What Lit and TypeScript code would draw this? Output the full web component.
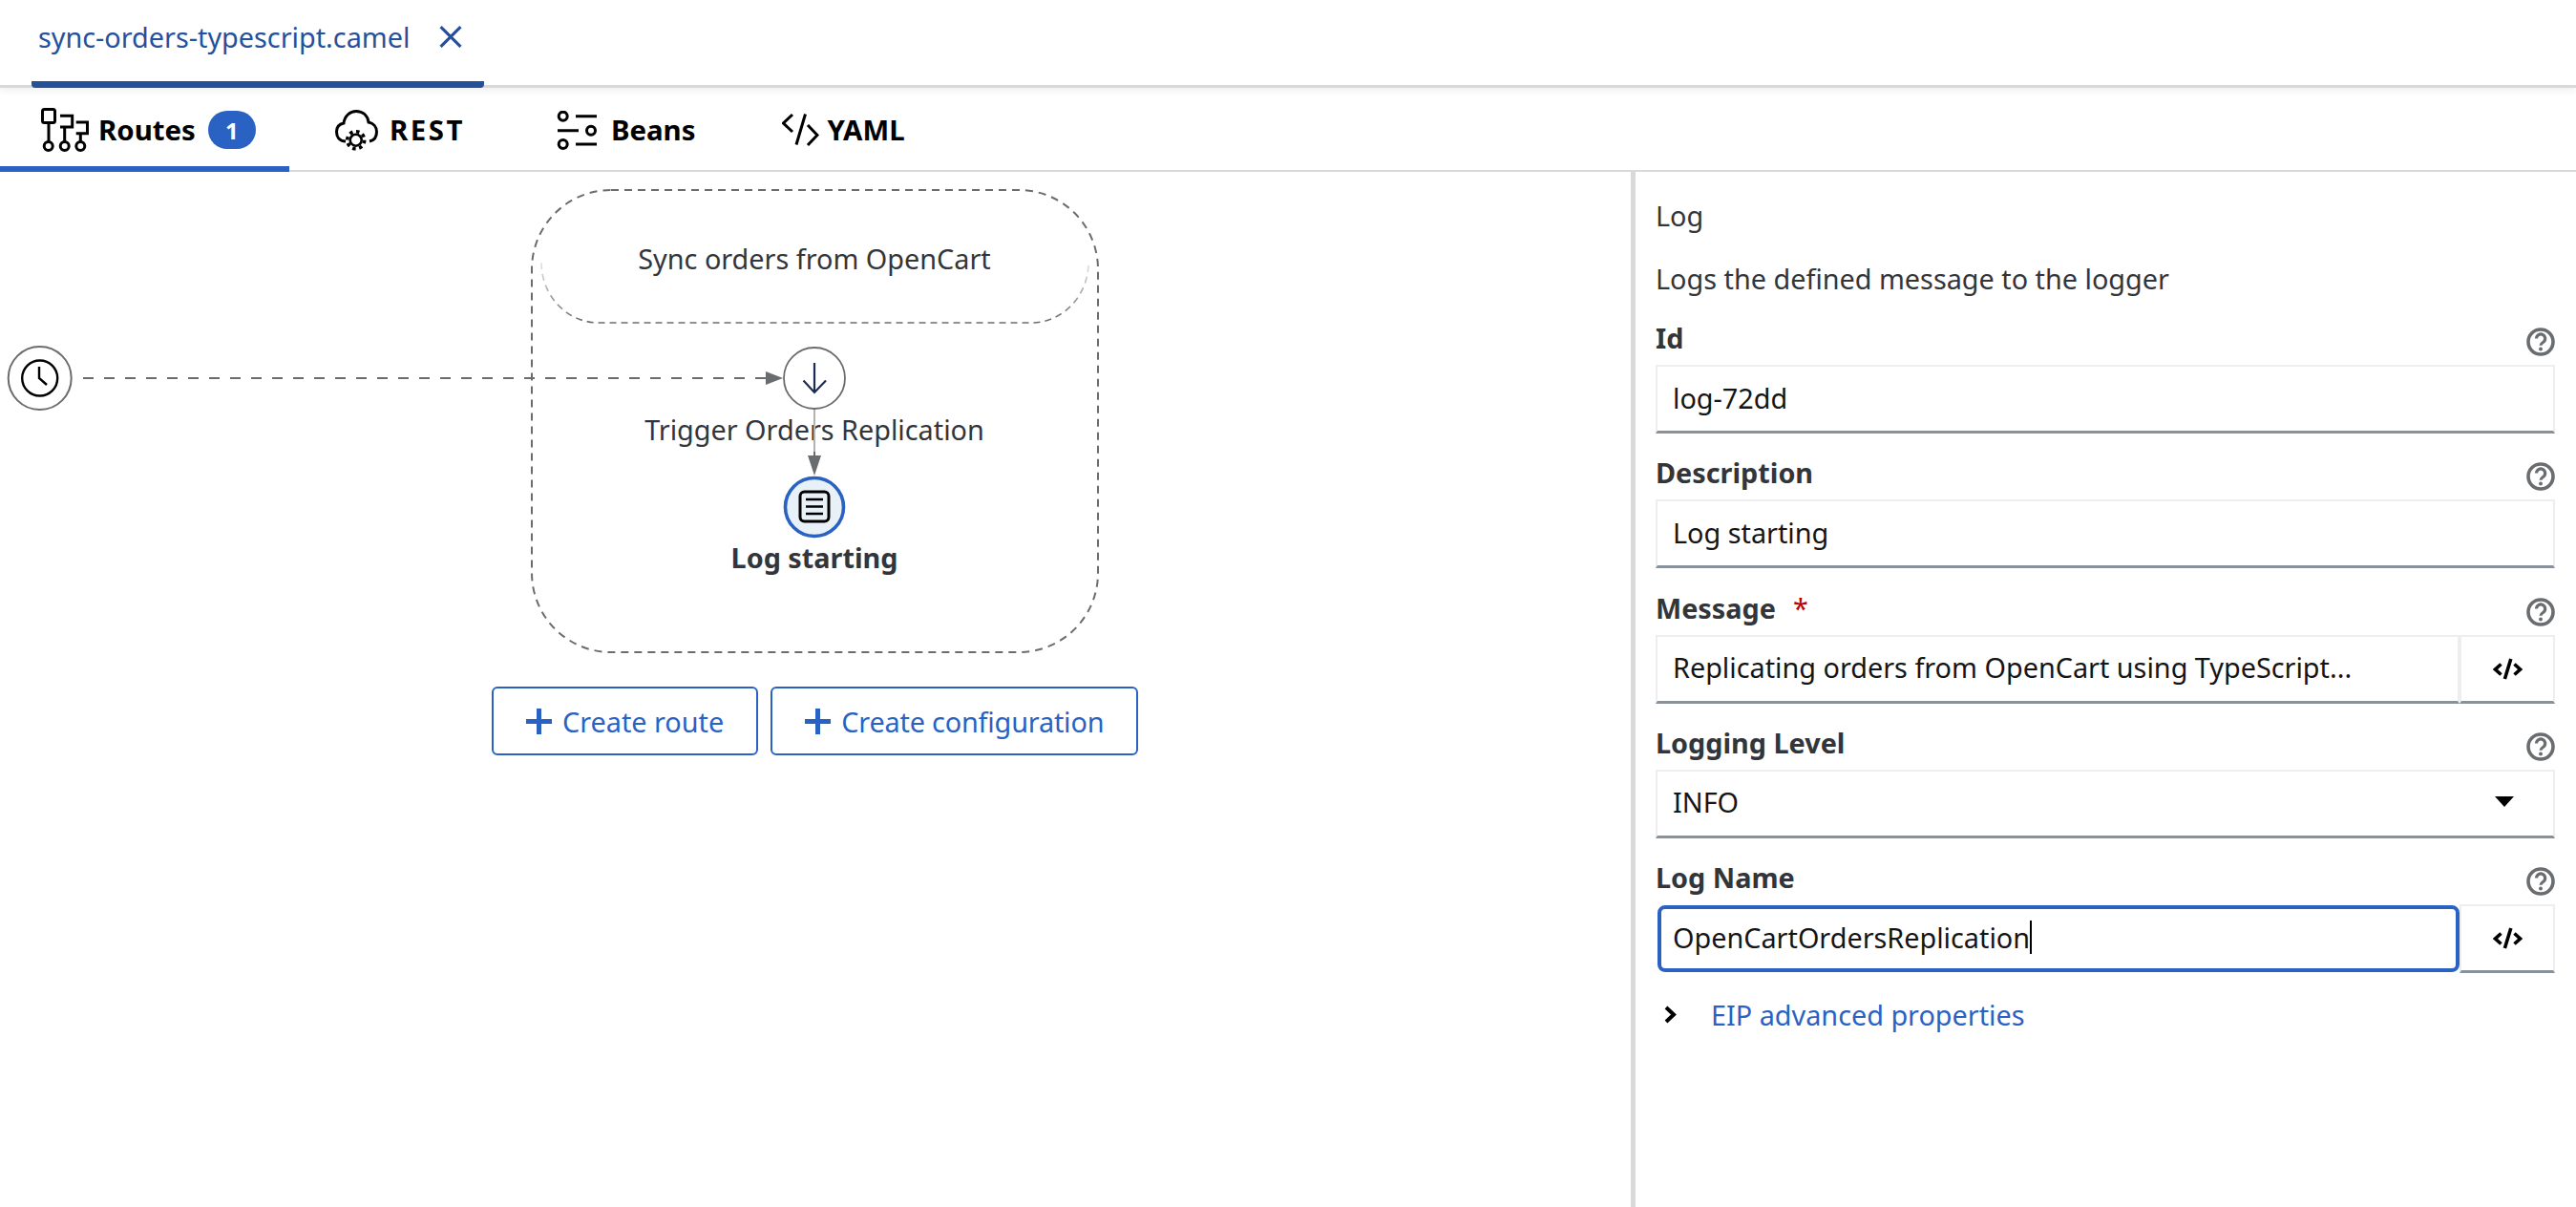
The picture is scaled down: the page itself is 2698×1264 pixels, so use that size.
import { LitElement, html, css, svg } from 'lit'
import { customElement } from 'lit/decorators.js'

const helpIcon = html`<svg class="help" viewBox="0 0 30 30" fill="none" stroke="#6a6d70" stroke-width="3.6">
  <circle cx="15" cy="15" r="13" />
  <path d="M10.5 11.5a4.6 4.6 0 1 1 7 4c-1.6 1-2.5 1.6-2.5 3.2" stroke-width="3.2" />
  <circle cx="15" cy="22.6" r="2" fill="#6a6d70" stroke="none" />
</svg>`

const codeIcon = html`<svg class="code" viewBox="0 0 31 25" fill="none" stroke="#000" stroke-width="3.6">
  <path d="M8.5 7.5 2.5 13 8.5 18.5M22.5 7.5 28.5 13 22.5 18.5M18.8 2 12.4 23" />
</svg>`

const fields = [
  { label: 'Id', value: 'log-72dd' },
  { label: 'Description', value: 'Log starting' },
  { label: 'Message', value: 'Replicating orders from OpenCart using TypeScript...', required: true, addon: true },
  { label: 'Logging Level', value: 'INFO', select: true },
  { label: 'Log Name', value: 'OpenCartOrdersReplication', addon: true, focused: true },
]

@customElement('app-root')
export class AppRoot extends LitElement {
  static styles = css`
    :host {
      display: block;
      width: 2698px;
      height: 1264px;
      overflow: hidden;
      background: #fff;
      font-family: 'Noto Sans', 'Open Sans', sans-serif;
      font-size: 28.8px;
      color: #32363a;
    }
    .filebar {
      height: 89px;
      border-bottom: 3px solid #d9d9d9;
      padding-left: 33px;
      box-shadow: 0 4px 6px rgba(0, 0, 0, 0.05);
      position: relative;
    }
    .filetab {
      width: 474px;
      height: 92px;
      box-sizing: border-box;
      padding: 0 0 8px 7px;
      display: flex;
      align-items: center;
      gap: 31px;
      color: #27509b;
      border-bottom: 7px solid #27509b;
      border-radius: 0 0 4px 4px;
    }
    .filetab svg {
      width: 24px;
      height: 23px;
    }
    .tabs {
      display: flex;
      height: 88px;
      box-sizing: border-box;
      border-bottom: 2px solid #d9d9d9;
      font-weight: 700;
      font-size: 29.4px;
      color: #000;
    }
    .tab {
      display: flex;
      align-items: center;
      height: 88px;
      box-sizing: border-box;
      padding: 0 48px;
    }
    .tab.active {
      width: 303px;
      padding: 6px 0 0 43px;
      border-bottom: 6px solid #2a62c4;
    }
    .tab.last {
      padding-left: 43px;
    }
    .tab .label {
      margin-left: 10px;
    }
    .tab.rest .label {
      margin-left: 12px;
      letter-spacing: 2.5px;
    }
    .tab.beans .label {
      margin-left: 15px;
    }
    .tab.last .label {
      margin-left: 8px;
    }
    .badge {
      margin-left: 13px;
      width: 50px;
      height: 40px;
      border-radius: 20px;
      background: #2a62c4;
      color: #fff;
      font-size: 24px;
      display: flex;
      align-items: center;
      justify-content: center;
    }
    .main {
      display: flex;
      height: 1084px;
    }
    .canvas {
      width: 1708px;
      flex: none;
    }
    .diagram {
      display: block;
      width: 1708px;
      height: 539px;
    }
    .diagram text {
      font-family: 'Noto Sans', 'Open Sans', sans-serif;
      font-size: 28.8px;
      fill: #32363a;
      text-anchor: middle;
    }
    .diagram text.strong {
      font-weight: 700;
    }
    .actions {
      display: flex;
      gap: 13px;
      padding-left: 515px;
    }
    .action {
      height: 72px;
      box-sizing: border-box;
      border: 2px solid #2a62c4;
      border-radius: 6px;
      display: flex;
      align-items: center;
      gap: 11px;
      padding: 0 34px;
      color: #2a62c4;
    }
    .action.config {
      letter-spacing: -0.17px;
    }
    .action svg {
      width: 27px;
      height: 27px;
    }
    .panel {
      flex: 1;
      border-left: 5px solid #d9d9d9;
      padding: 26px 22px 0 21px;
    }
    .title,
    .desc {
      line-height: 40px;
    }
    .title {
      margin-bottom: 26px;
    }
    .form {
      display: grid;
      gap: 23.25px;
      margin-top: 24px;
    }
    .row {
      height: 46px;
      display: flex;
      justify-content: space-between;
    }
    .row label {
      font-weight: 700;
      line-height: 36px;
    }
    .req {
      color: #bb0000;
      margin-left: 18px;
      font-weight: 400;
    }
    .help {
      width: 30px;
      height: 30px;
      margin-top: 7px;
    }
    .control {
      display: flex;
      height: 72px;
      color: #151515;
    }
    .box {
      flex: 1;
      box-sizing: border-box;
      border: 2px solid #eeeeee;
      border-bottom: 3px solid #89919a;
      padding: 0 16px 3px;
      display: flex;
      align-items: center;
      justify-content: space-between;
    }
    .box.focus {
      margin: 1px 0 1px 2px;
      height: 70px;
      border: 4px solid #2a62c4;
      border-radius: 8px;
      padding: 0 14px 3px 12px;
      justify-content: flex-start;
    }
    .caret {
      width: 2px;
      height: 35px;
      background: #000;
    }
    .addon {
      width: 100px;
      box-sizing: border-box;
      flex: none;
      border: 2px solid #eeeeee;
      border-bottom: 3px solid #89919a;
      display: flex;
      align-items: center;
      justify-content: center;
    }
    .code {
      width: 31px;
      height: 25px;
    }
    .arrow {
      width: 20px;
      height: 11px;
      margin-right: 25px;
    }
    .expander {
      display: flex;
      align-items: center;
      height: 40px;
      margin-top: 23px;
      padding-left: 9px;
      gap: 36px;
      color: #2a62c4;
    }
    .expander svg {
      width: 13px;
      height: 19px;
    }
  `

  private renderField(f: (typeof fields)[number]) {
    return html`<div class="field">
      <div class="row">
        <label>${f.label}${f.required ? html`<span class="req">*</span>` : ''}</label>
        ${helpIcon}
      </div>
      <div class="control">
        <div class="box ${f.focused ? 'focus' : ''}">
          <span>${f.value}</span>
          ${f.focused ? html`<span class="caret"></span>` : ''}
          ${f.select
            ? html`<svg class="arrow" viewBox="0 0 20 11"><path d="M0 0h20L10 11z" fill="#000" /></svg>`
            : ''}
        </div>
        ${f.addon ? html`<div class="addon">${codeIcon}</div>` : ''}
      </div>
    </div>`
  }

  private renderDiagram() {
    return html`<svg class="diagram" viewBox="0 180 1708 539" fill="none">
      ${svg`
        <defs>
          <linearGradient id="fade" gradientUnits="userSpaceOnUse" x1="0" y1="275" x2="0" y2="338">
            <stop offset="0" stop-color="#e4e4e4" />
            <stop offset="1" stop-color="#6a6d70" />
          </linearGradient>
        </defs>
        <path d="M640 199H1067A83 83 0 0 1 1150 282V600A83 83 0 0 1 1067 683H640A83 83 0 0 1 557 600V282A83 83 0 0 1 640 199Z"
          stroke="#6a6d70" stroke-width="2" stroke-dasharray="8 6" />
        <path d="M567 275A60 63 0 0 0 627 338H1080A60 63 0 0 0 1140 275" stroke="url(#fade)" stroke-width="1.6" stroke-dasharray="7 5" />
        <path d="M87 396H805" stroke="#6a6d70" stroke-width="2" stroke-dasharray="11 11" />
        <path d="M802 389 820 396 802 403Z" fill="#6a6d70" />
        <circle cx="41.7" cy="396" r="33" fill="#fff" stroke="#6a6d70" stroke-width="2" />
        <circle cx="41.7" cy="396" r="18.5" stroke="#000" stroke-width="2.4" />
        <path d="M41 384V396L49 403" stroke="#000" stroke-width="2.4" />
        <text x="853" y="282">Sync orders from OpenCart</text>
        <text x="853" y="461">Trigger Orders Replication</text>
        <path d="M853 428V478" stroke="#b3b3b3" stroke-width="2" />
        <path d="M853 473V478" stroke="#6a6d70" stroke-width="2" />
        <path d="M846 477H860L853 498Z" fill="#6a6d70" />
        <circle cx="853" cy="396" r="32" fill="#fff" stroke="#6a6d70" stroke-width="1.8" />
        <path d="M853 380V411M841.5 398.5 853 411 865 398.5" stroke="#1d2d50" stroke-width="2.2" />
        <circle cx="853" cy="531" r="30.5" fill="#e8f0f8" stroke="#2a62c4" stroke-width="3.6" />
        <rect x="838" y="515" width="30" height="31" rx="4.5" stroke="#000" stroke-width="3" />
        <path d="M844 523H862M844 530.5H862M844 538H862" stroke="#000" stroke-width="2.6" />
        <text class="strong" x="853" y="595">Log starting</text>
      `}
    </svg>`
  }

  render() {
    return html`
      <div class="filebar">
        <div class="filetab">
          <span>sync-orders-typescript.camel</span>
          <svg viewBox="0 0 23 22" fill="none" stroke="#27509b" stroke-width="3"><path d="M1.5 1 21.5 21M21.5 1 1.5 21" /></svg>
        </div>
      </div>
      <div class="tabs">
        <div class="tab active">
          <svg width="50" height="46" viewBox="0 0 50 46" fill="none" stroke="#000" stroke-width="3">
            <rect x="1.5" y="1.5" width="13" height="14" rx="2" />
            <path d="M8 16V35.5M20 8.3H32.7V20H20M24.7 20V35.5M36.7 15H48.5V26.7H36.7M41.3 26.7V35.5" />
            <circle cx="7.7" cy="40" r="4.5" /><circle cx="24.7" cy="40" r="4.5" /><circle cx="41.3" cy="40" r="4.5" />
          </svg>
          <span class="label">Routes</span>
          <span class="badge">1</span>
        </div>
        <div class="tab rest">
          <svg width="45" height="43" viewBox="0 0 45 43" fill="none" stroke="#000" stroke-width="3">
            <path d="M11 33C4 33 1.5 28 1.5 23 1.5 18 4 15 9 14 10 6 16 1.5 22 1.5 29 1.5 34 6 35 13 40 14 43.5 18 43.5 23 43.5 28 41 32 36 33" />
            <circle cx="21.7" cy="31.7" r="6" fill="#fff" stroke-width="2.6" />
            <circle cx="21.7" cy="31.7" r="9" stroke-width="3.6" stroke-dasharray="3.5 3.57" />
          </svg>
          <span class="label">REST</span>
        </div>
        <div class="tab beans">
          <svg width="42" height="41" viewBox="0 0 42 41" fill="none" stroke="#000" stroke-width="3">
            <circle cx="6.7" cy="5.7" r="4.5" /><circle cx="36" cy="20.7" r="4.5" /><circle cx="6.7" cy="35" r="4.5" />
            <path d="M20 5.7H42M1 20.7H23M20 35H42" />
          </svg>
          <span class="label">Beans</span>
        </div>
        <div class="tab last">
          <svg width="39" height="36" viewBox="0 0 39 36" fill="none" stroke="#000" stroke-width="3">
            <path d="M11 2 1.5 11 11 20M24.5 1.5 15 33.5M27 13 37 23.5 27 34" />
          </svg>
          <span class="label">YAML</span>
        </div>
      </div>
      <div class="main">
        <div class="canvas">
          ${this.renderDiagram()}
          <div class="actions">
            <div class="action">
              <svg viewBox="0 0 27 27" fill="none" stroke="#2a62c4" stroke-width="5"><path d="M13.5 0V27M0 13.5H27" /></svg>
              <span>Create route</span>
            </div>
            <div class="action config">
              <svg viewBox="0 0 27 27" fill="none" stroke="#2a62c4" stroke-width="5"><path d="M13.5 0V27M0 13.5H27" /></svg>
              <span>Create configuration</span>
            </div>
          </div>
        </div>
        <div class="panel">
          <div class="title">Log</div>
          <div class="desc">Logs the defined message to the logger</div>
          <div class="form">${fields.map((f) => this.renderField(f))}</div>
          <div class="expander">
            <svg viewBox="0 0 13 19" fill="none" stroke="#000" stroke-width="4"><path d="M2 2 10 9.5 2 17" /></svg>
            <span>EIP advanced properties</span>
          </div>
        </div>
      </div>
    `
  }
}
